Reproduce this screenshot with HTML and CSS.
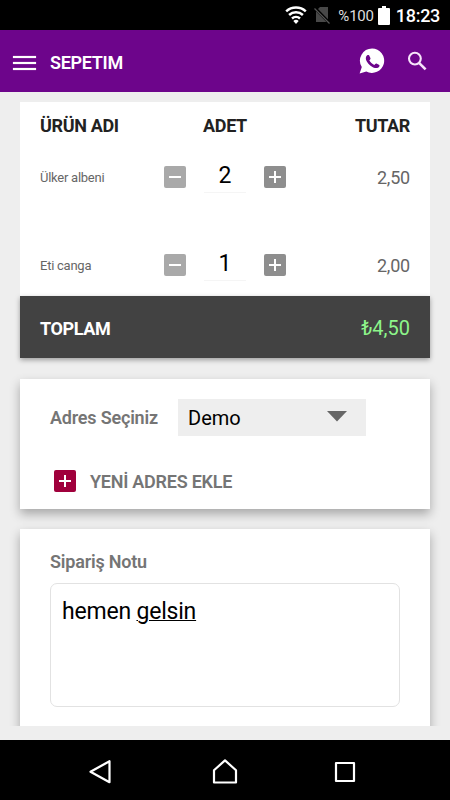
FILE: index.html
```html
<!DOCTYPE html>
<html lang="tr">
  <head>
    <meta charset="utf-8">
    <title>Sepetim</title>
    <link rel="stylesheet" href="styles.css">
  </head>
  <body>
    <div class="status-bar">
      <svg class="wifi" width="22" height="18" viewBox="0 0 22 18" fill="none" stroke="#fff" stroke-width="2.5">
        <path d="M1.2 5.4a14.5 14.5 0 0 1 19.6 0" />
        <path d="M4.1 9a10 10 0 0 1 13.8 0" />
        <path d="M7 12.5a6 6 0 0 1 8 0" />
        <path d="M11 18l-2.7-3.1a4 4 0 0 1 5.4 0z" fill="#fff" stroke="none" />
      </svg>
      <svg class="no-sim" width="17" height="18" viewBox="0 0 17 18">
        <path d="M6 1h8v15H2V5z" fill="#484848" />
        <path d="M.5 1.5l15 15.5" stroke="#000" stroke-width="3" />
        <path d="M.5 2.5l15 15" stroke="#555" stroke-width="1.3" />
      </svg>
      <span class="percent">%100</span>
      <svg class="battery" width="12" height="19" viewBox="0 0 12 19">
        <path d="M4 0h4v2h3q1 0 1 1v15q0 1-1 1H1q-1 0-1-1V3q0-1 1-1h3z" fill="#fff" />
      </svg>
      <span class="clock">18:23</span>
    </div>

    <div class="app-bar">
      <div class="burger"><span></span><span></span><span></span></div>
      <h1>SEPETIM</h1>
      <svg class="whatsapp" width="26" height="26" viewBox="0 0 26 26">
        <path d="M13.1.5a12.2 12.2 0 1 1-5.8 23L.6 25.5l2.2-6.4A12.2 12.2 0 0 1 13.1.5z" fill="#fff" />
        <path d="M7.3 8.2C8 7 9.3 6.5 10.1 7.2l1.4 3c.2.8-.7 1.5-1.2 2.1 1.2 2.2 2.8 3.7 5 4.6.8-.7 1.4-1.8 2.2-1.4l2.8 1.4c.7.7-.2 2.3-1.4 2.9-2 .9-5.2-.2-7.7-2.3-2.6-2.2-4.5-5.2-4.4-7.3.1-.8.2-1.4.5-2z" fill="#6d058b" />
      </svg>
      <svg class="search" width="20" height="20" viewBox="0 0 20 20" fill="none" stroke="#f6e4fa" stroke-width="2.1">
        <circle cx="7.9" cy="7.6" r="5.9" />
        <path d="M12 11.8l6.6 6.6" stroke-width="2.6" />
      </svg>
    </div>

    <div class="content">
      <div class="card cart">
        <div class="cart-row cart-head">
          <span>ÜRÜN ADI</span>
          <span class="center">ADET</span>
          <span class="right">TUTAR</span>
        </div>
        <div class="cart-row item">
          <span class="name">Ülker albeni</span>
          <div class="stepper">
            <button class="square minus"></button>
            <span class="qty">2</span>
            <button class="square plus"></button>
          </div>
          <span class="price">2,50</span>
        </div>
        <div class="cart-row item">
          <span class="name">Eti canga</span>
          <div class="stepper">
            <button class="square minus"></button>
            <span class="qty">1</span>
            <button class="square plus"></button>
          </div>
          <span class="price">2,00</span>
        </div>
        <div class="total">
          <span>TOPLAM</span>
          <span class="sum">₺4,50</span>
        </div>
      </div>

      <div class="card address">
        <div class="address-row">
          <label>Adres Seçiniz</label>
          <div class="dropdown">
            <span>Demo</span>
            <svg width="20" height="11" viewBox="0 0 20 11"><path d="M0 0h20L10 10.5z" fill="#666" /></svg>
          </div>
        </div>
        <div class="new-address">
          <button class="square plus red"></button>
          <span>YENİ ADRES EKLE</span>
        </div>
      </div>

      <div class="card note">
        <label>Sipariş Notu</label>
        <div class="note-box">hemen <u>gelsin</u></div>
      </div>
    </div>

    <div class="nav-bar">
      <svg width="24" height="26" viewBox="0 0 24 26"><path d="M21.5 2.2v21L2.5 12.7z" /></svg>
      <svg class="home" width="26" height="26" viewBox="0 0 26 26"><path d="M2 23.5V11.2L13 1.4l11 9.8v12.3z" /></svg>
      <svg width="22" height="22" viewBox="0 0 22 22"><path d="M2 2h18v18H2z" /></svg>
    </div>
  </body>
</html>
```
FILE: styles.css
```css
* {
  box-sizing: border-box;
}
body {
  margin: 0;
  width: 450px;
  height: 800px;
  display: flex;
  flex-direction: column;
  overflow: hidden;
  background-color: #eeeeee;
  font-family: Roboto, sans-serif;
}
.status-bar {
  display: flex;
  align-items: center;
  justify-content: flex-end;
  height: 30px;
  padding-right: 10px;
  background-color: #000;
  color: #fff;
}
.no-sim {
  margin-left: 7px;
}
.percent {
  margin-left: 7px;
  font-size: 15px;
  letter-spacing: -0.2px;
  color: #ddd;
  padding-top: 2px;
}
.battery {
  margin-left: 4px;
}
.clock {
  margin-left: 6px;
  font-size: 18px;
  font-weight: 500;
  letter-spacing: -0.3px;
}
.app-bar {
  display: flex;
  align-items: center;
  height: 62px;
  padding: 0 23px 0 13px;
  background-color: #6d058b;
}
.burger {
  display: flex;
  flex-direction: column;
  gap: 4px;
  width: 23px;
  margin-top: 3px;
}
.burger span {
  height: 2px;
  background-color: #fff;
  box-shadow: 0 0 1px #fbeffd;
}
h1 {
  flex: 1;
  margin: 2px 0 0 14px;
  font-size: 18px;
  font-weight: 600;
  letter-spacing: -0.3px;
  color: #fff;
}
.search {
  margin-left: 22px;
}
.content {
  height: 634px;
  padding: 10px 20px 0;
  overflow: hidden;
}
.card {
  background-color: #fff;
  box-shadow: 0 5px 10px rgba(0, 0, 0, 0.3);
}
.cart {
  height: 256px;
  margin-bottom: 21px;
  box-shadow: none;
}
.cart-row {
  display: grid;
  grid-template-columns: 1fr 122px 1fr;
  align-items: center;
  padding: 0 20px;
}
.cart-head {
  height: 46px;
  font-size: 18px;
  font-weight: 700;
  letter-spacing: -0.35px;
  color: #222;
}
.center {
  text-align: center;
}
.right {
  text-align: right;
}
.item {
  height: 58px;
  margin-bottom: 30px;
}
.item + .item {
  margin-bottom: 2px;
}
.name {
  font-size: 13px;
  letter-spacing: -0.25px;
  color: #666;
}
.stepper {
  display: flex;
  align-items: center;
  justify-content: space-between;
}
.square {
  display: flex;
  align-items: center;
  justify-content: center;
  width: 22px;
  height: 22px;
  padding: 0;
  border: none;
  border-radius: 2px;
  background-color: #8e8e8e;
}
.square::before {
  content: "";
  width: 12px;
  height: 12px;
  background: linear-gradient(#fff, #fff) center / 12px 2px no-repeat;
}
.plus::before {
  background: linear-gradient(#fff, #fff) center / 12px 2px no-repeat,
    linear-gradient(#fff, #fff) center / 2px 12px no-repeat;
}
.minus {
  background-color: #a9a9a9;
}
.red {
  background-color: #a0003c;
}
.qty {
  width: 42px;
  height: 32px;
  border-bottom: 1px solid #f5f5f5;
  font-size: 23px;
  line-height: 30px;
  text-align: center;
  color: #000;
}
.price {
  padding-top: 1px;
  font-size: 18px;
  letter-spacing: -0.2px;
  text-align: right;
  color: #666;
}
.total {
  display: flex;
  align-items: center;
  justify-content: space-between;
  height: 62px;
  padding: 2px 20px 0;
  background-color: #424242;
  box-shadow: 0 2px 5px rgba(0, 0, 0, 0.35);
  font-size: 18px;
  font-weight: 700;
  letter-spacing: -0.4px;
  color: #fff;
}
.sum {
  font-size: 20px;
  font-weight: 400;
  letter-spacing: 0;
  color: #8df58a;
}
label {
  font-size: 18px;
  font-weight: 600;
  letter-spacing: -0.2px;
  color: #757575;
}
.address {
  height: 130px;
  margin-bottom: 20px;
  padding: 20px 30px;
}
.address-row {
  display: flex;
  align-items: center;
}
.address-row label {
  width: 128px;
}
.dropdown {
  display: flex;
  align-items: center;
  justify-content: space-between;
  width: 188px;
  height: 37px;
  padding: 0 19px 0 10px;
  background-color: #eeeeee;
  font-size: 20px;
  color: #000;
}
.dropdown svg {
  margin-bottom: 3px;
}
.new-address {
  display: flex;
  align-items: center;
  gap: 14px;
  margin-top: 34px;
  padding-left: 4px;
  font-size: 18px;
  font-weight: 600;
  letter-spacing: -0.25px;
  color: #757575;
}
.note {
  height: 240px;
  padding: 22px 30px;
}
.note label {
  display: block;
  line-height: 22px;
}
.note-box {
  height: 124px;
  margin-top: 10px;
  padding: 12px 11px;
  border: 1px solid #e2e2e2;
  border-radius: 7px;
  font-size: 23px;
  line-height: 32px;
  letter-spacing: -0.2px;
  color: #000;
}
.note-box u {
  text-decoration-thickness: 1px;
}
.nav-bar {
  display: flex;
  align-items: center;
  justify-content: space-between;
  height: 60px;
  margin-top: 14px;
  padding: 3px 94px 0 88px;
  background-color: #000;
}
.nav-bar path {
  fill: none;
  stroke: #fff;
  stroke-width: 2.2;
  stroke-linejoin: round;
}
.home {
  margin-left: 4px;
}
```
